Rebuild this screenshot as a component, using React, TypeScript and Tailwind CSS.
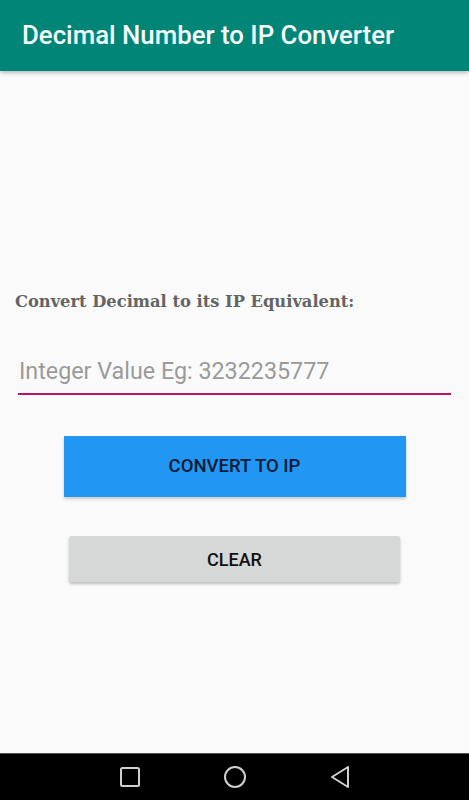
export default function App() {
  return (
    <div className="flex h-[800px] w-[469px] flex-col bg-[#fafafa]" style={{ fontFamily: "Roboto, sans-serif" }}>
      <header className="relative z-10 flex h-[71px] shrink-0 items-center bg-[#008577] pl-[22px] shadow-[0_2px_4px_rgba(0,0,0,0.25)]">
        <h1 className="text-[25.8px] font-medium leading-none text-[#f4fbfa]">Decimal Number to IP Converter</h1>
      </header>

      <main className="flex flex-1 flex-col">
        <p
          className="mt-[223px] pl-[15px] text-[16.3px] font-bold leading-none text-[#646464]"
          style={{ fontFamily: '"DejaVu Serif", serif' }}
        >
          Convert Decimal to its IP Equivalent:
        </p>

        <div className="mx-[18px] mt-[39px] flex h-[46px] items-center border-b-2 border-[#c0115c] pl-[1px]">
          <span className="text-[23.3px] leading-none text-[#9a9a9a]">Integer Value Eg: 3232235777</span>
        </div>

        <div className="mt-[41px] flex justify-center">
          <button className="flex h-[61px] w-[342px] items-center justify-center bg-[#2196f3] text-[18.5px] font-medium uppercase text-[#0b1a33] shadow-[0_2px_3px_rgba(0,0,0,0.2)]">
            Convert to IP
          </button>
        </div>

        <div className="mt-[39px] flex justify-center">
          <button className="flex h-[46px] w-[331px] items-center justify-center rounded-[2px] bg-[#d6d7d7] text-[18px] font-medium uppercase text-[#111111] shadow-[0_2px_3px_rgba(0,0,0,0.25)]">
            Clear
          </button>
        </div>
      </main>

      <nav className="flex h-[47px] shrink-0 items-center border-t border-[#555] bg-black">
        <div className="flex w-full items-center">
          <svg className="ml-[119px]" width="22" height="22" viewBox="0 0 22 22">
            <rect x="2" y="2" width="18" height="18" rx="1.5" fill="none" stroke="#d0d0d0" strokeWidth="2" />
          </svg>
          <svg className="ml-[82px]" width="24" height="24" viewBox="0 0 24 24">
            <circle cx="12" cy="12" r="10" fill="none" stroke="#d0d0d0" strokeWidth="2" />
          </svg>
          <svg className="ml-[82px]" width="22" height="24" viewBox="0 0 22 24">
            <path d="M19 2 L3 12 L19 22 Z" fill="none" stroke="#d0d0d0" strokeWidth="2" strokeLinejoin="round" />
          </svg>
        </div>
      </nav>
    </div>
  );
}
